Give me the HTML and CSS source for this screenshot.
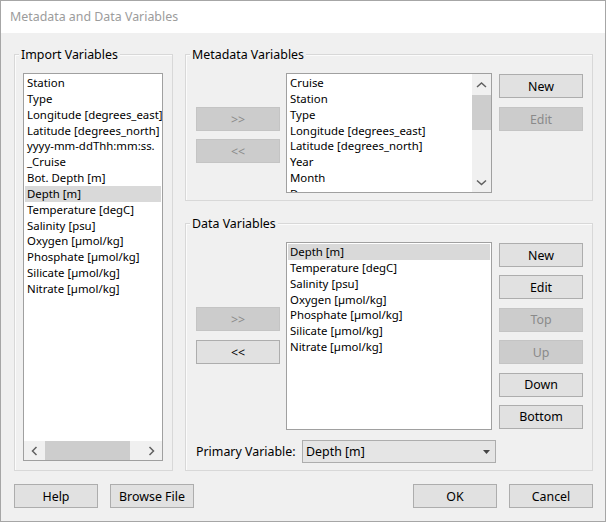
FILE: index.html
```html
<!DOCTYPE html>
<html>
<head>
<meta charset="utf-8">
<title>Metadata and Data Variables</title>
<link rel="stylesheet" href="styles.css">
</head>
<body>
<div class="window">
  <div class="titlebar">Metadata and Data Variables</div>
  <div class="client">
    <div class="main">
      <div class="group import">
        <div class="group-title">Import Variables</div>
        <div class="listbox import-list">
          <div class="items">
            <div class="item">Station</div>
            <div class="item">Type</div>
            <div class="item">Longitude [degrees_east]</div>
            <div class="item">Latitude [degrees_north]</div>
            <div class="item">yyyy-mm-ddThh:mm:ss.</div>
            <div class="item">_Cruise</div>
            <div class="item">Bot. Depth [m]</div>
            <div class="item sel">Depth [m]</div>
            <div class="item">Temperature [degC]</div>
            <div class="item">Salinity [psu]</div>
            <div class="item">Oxygen [µmol/kg]</div>
            <div class="item">Phosphate [µmol/kg]</div>
            <div class="item">Silicate [µmol/kg]</div>
            <div class="item">Nitrate [µmol/kg]</div>
          </div>
          <div class="hscroll">
            <div class="sb-btn h"><svg width="20" height="19" viewBox="0 0 20 19"><polyline points="12.5,6 8.5,10 12.5,14" fill="none" stroke="#606060" stroke-width="1.5"/></svg></div>
            <div class="h-track"><div class="h-thumb"></div></div>
            <div class="sb-btn h"><svg width="20" height="19" viewBox="0 0 20 19"><polyline points="7.5,6 11.5,10 7.5,14" fill="none" stroke="#606060" stroke-width="1.5"/></svg></div>
          </div>
        </div>
      </div>

      <div class="right-col">
        <div class="group meta">
          <div class="group-title">Metadata Variables</div>
          <div class="gbody">
            <div class="move-col meta-move">
              <div class="btn disabled">&gt;&gt;</div>
              <div class="btn disabled">&lt;&lt;</div>
            </div>
            <div class="listbox meta-list">
              <div class="items">
                <div class="item">Cruise</div>
                <div class="item">Station</div>
                <div class="item">Type</div>
                <div class="item">Longitude [degrees_east]</div>
                <div class="item">Latitude [degrees_north]</div>
                <div class="item">Year</div>
                <div class="item">Month</div>
                <div class="item">Day</div>
              </div>
              <div class="vscroll">
                <div class="sb-btn v"><svg width="19" height="20" viewBox="0 0 19 20"><polyline points="5,13 9.5,9 14,13" fill="none" stroke="#606060" stroke-width="1.5"/></svg></div>
                <div class="v-track"><div class="v-thumb"></div></div>
                <div class="sb-btn v"><svg width="19" height="20" viewBox="0 0 19 20"><polyline points="5,8.5 9.5,12.5 14,8.5" fill="none" stroke="#606060" stroke-width="1.5"/></svg></div>
              </div>
            </div>
            <div class="side-col meta-side">
              <div class="btn">New</div>
              <div class="btn disabled">Edit</div>
            </div>
          </div>
        </div>

        <div class="group data">
          <div class="group-title">Data Variables</div>
          <div class="gbody">
            <div class="data-row">
              <div class="move-col data-move">
                <div class="btn disabled">&gt;&gt;</div>
                <div class="btn">&lt;&lt;</div>
              </div>
              <div class="listbox data-list">
                <div class="items">
                  <div class="item sel">Depth [m]</div>
                  <div class="item">Temperature [degC]</div>
                  <div class="item">Salinity [psu]</div>
                  <div class="item">Oxygen [µmol/kg]</div>
                  <div class="item">Phosphate [µmol/kg]</div>
                  <div class="item">Silicate [µmol/kg]</div>
                  <div class="item">Nitrate [µmol/kg]</div>
                </div>
              </div>
              <div class="side-col data-side">
                <div class="btn">New</div>
                <div class="btn">Edit</div>
                <div class="btn disabled">Top</div>
                <div class="btn disabled">Up</div>
                <div class="btn">Down</div>
                <div class="btn">Bottom</div>
              </div>
            </div>
            <div class="primary-row">
              <div class="primary-label">Primary Variable:</div>
              <div class="combo">
                <span class="combo-text">Depth [m]</span>
                <svg class="combo-arrow" width="7" height="4" viewBox="0 0 7 4"><polygon points="0,0 7,0 3.5,4" fill="#444"/></svg>
              </div>
            </div>
          </div>
        </div>
      </div>
    </div>

    <div class="footer">
      <div class="footer-left">
        <div class="btn">Help</div>
        <div class="btn">Browse File</div>
      </div>
      <div class="footer-right">
        <div class="btn">OK</div>
        <div class="btn">Cancel</div>
      </div>
    </div>
  </div>
</div>
</body>
</html>
```

FILE: styles.css
```css
* { box-sizing: border-box; }

html, body {
  margin: 0;
  padding: 0;
}

body {
  width: 606px;
  height: 522px;
  font-family: "Noto Sans", "Liberation Sans", sans-serif;
  font-size: 12.4px;
  color: #000;
  background: #f0f0f0;
}

.window {
  width: 606px;
  height: 522px;
  border: 1px solid #a6a6a6;
  display: flex;
  flex-direction: column;
  background: #f0f0f0;
}

.titlebar {
  height: 32px;
  line-height: 32px;
  padding-left: 9px;
  background: #fff;
  color: #9c9c9c;
  font-size: 12.4px;
  flex: none;
}

.client {
  flex: 1;
  padding: 21px 12px 0 13px;
  display: flex;
  flex-direction: column;
}

.main {
  display: grid;
  grid-template-columns: 159px 408px;
  column-gap: 12px;
  height: 417px;
}

.right-col {
  display: flex;
  flex-direction: column;
  gap: 22px;
}

.group {
  border: 1px solid #d8d8d8;
  box-shadow: inset 1px 1px 0 #fbfbfb;
  display: flex;
  flex-direction: column;
}

.group.meta { height: 147px; }
.group.data { height: 248px; }

.group-title {
  align-self: flex-start;
  margin: -8px 0 0 4px;
  padding: 0 2px;
  height: 16px;
  line-height: 16px;
  background: #f0f0f0;
  white-space: nowrap;
}

/* list boxes */
.listbox {
  border: 1px solid #a0a0a0;
  background: #fff;
  overflow: hidden;
  font-size: 11.4px;
}

.items {
  padding-top: 1px;
  overflow: hidden;
  min-width: 0;
}

.item {
  height: 15.85px;
  line-height: 15.85px;
  margin: 0 1px;
  padding-left: 2px;
  white-space: nowrap;
}

.item.sel { background: #d9d9d9; }

.import-list {
  flex: 1;
  margin: 10px 9px 9px 8px;
  display: flex;
  flex-direction: column;
}

.import-list .items { flex: 1; }

.hscroll {
  height: 19px;
  flex: none;
  display: flex;
  background: #f0f0f0;
}

.sb-btn {
  flex: none;
  display: flex;
}

.sb-btn.h { width: 20px; height: 19px; }
.sb-btn.v { width: 19px; height: 20px; }

.h-track {
  flex: 1;
  padding-left: 1px;
}

.h-thumb {
  width: 85px;
  height: 19px;
  background: #cdcdcd;
}

.vscroll {
  width: 19px;
  flex: none;
  display: flex;
  flex-direction: column;
  background: #f0f0f0;
}

.v-track {
  flex: 1;
  padding-top: 1px;
}

.v-thumb {
  height: 35px;
  background: #cdcdcd;
}

/* buttons */
.btn {
  width: 84px;
  height: 24px;
  border: 1px solid #adadad;
  background: #e1e1e1;
  display: flex;
  align-items: center;
  justify-content: center;
  white-space: nowrap;
  flex: none;
}

.btn.disabled {
  background: #cccccc;
  border-color: #c4c4c4;
  color: #8a8a8a;
}

/* group bodies */
.gbody {
  flex: 1;
  padding: 10px 9px 7px 10px;
}

.meta .gbody {
  display: flex;
}

.move-col {
  display: flex;
  flex-direction: column;
  width: 84px;
  margin-right: 6px;
  flex: none;
}

.side-col {
  display: flex;
  flex-direction: column;
  width: 84px;
  margin-left: 7px;
  flex: none;
  padding-top: 1px;
}

.meta-move { padding-top: 34px; gap: 8px; }
.meta-side { gap: 9px; }

.meta-list {
  width: 206px;
  height: 120px;
  display: flex;
}

.meta-list .items { flex: 1; }

.data .gbody {
  display: flex;
  flex-direction: column;
}

.data-row {
  display: flex;
  height: 188px;
}

.data-move { padding-top: 65px; gap: 9px; }
.data-side { gap: 8.4px; }

.data-list {
  width: 206px;
  height: 188px;
}

.primary-row {
  margin-top: 10px;
  height: 23px;
  display: flex;
  align-items: center;
}

.primary-label {
  width: 106px;
  padding-left: 0;
  white-space: nowrap;
}

.combo {
  width: 194px;
  height: 23px;
  border: 1px solid #adadad;
  background: #e5e5e5;
  display: flex;
  align-items: center;
  justify-content: space-between;
  padding: 0 5px 0 3px;
}

.combo-arrow { display: block; }

/* footer */
.footer {
  margin-top: 13px;
  display: flex;
  justify-content: space-between;
}

.footer-left, .footer-right {
  display: flex;
  gap: 12px;
}
```
